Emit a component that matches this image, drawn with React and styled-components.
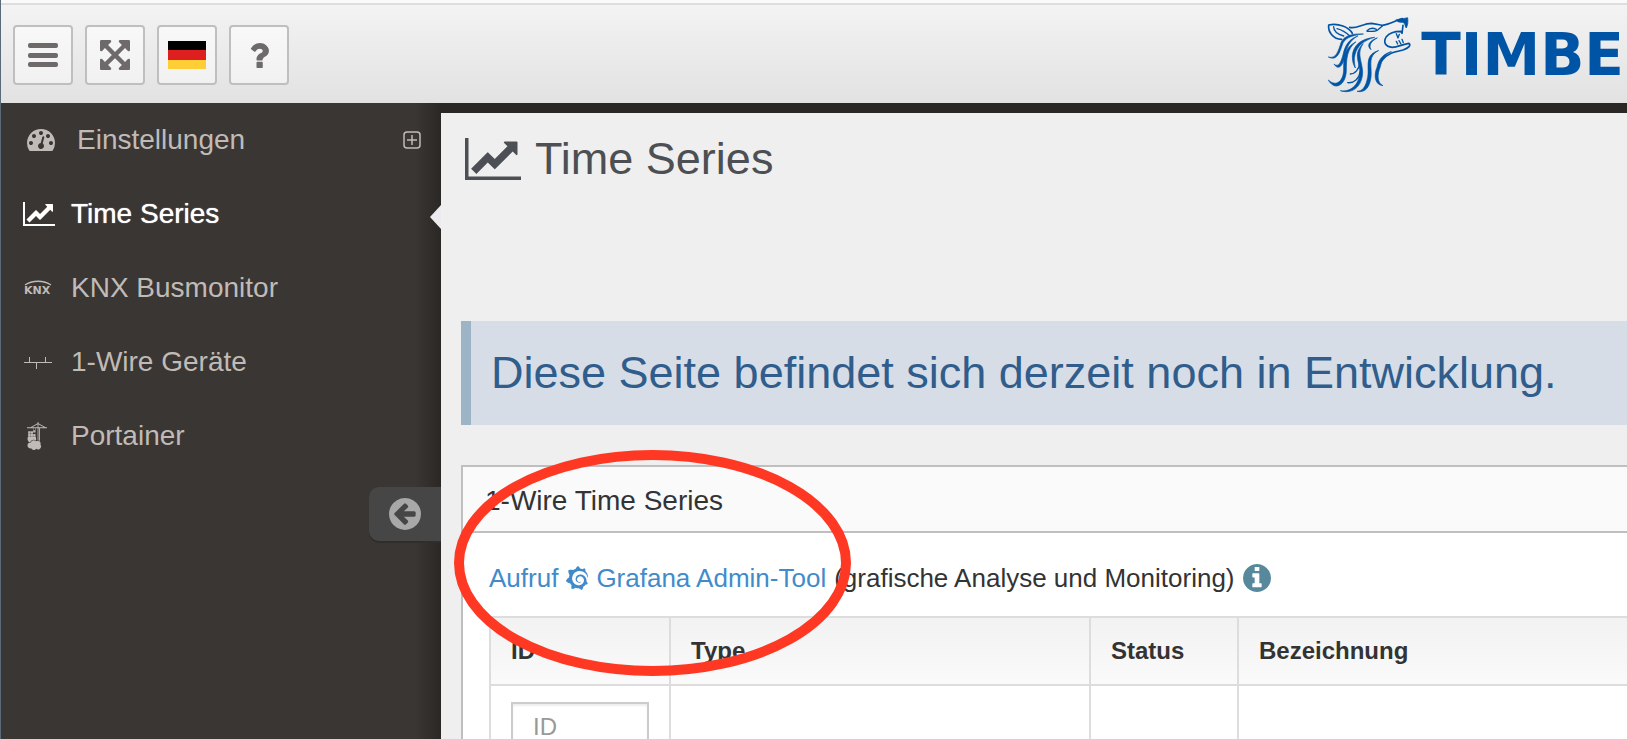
import React from 'react'
import styled, { createGlobalStyle, css } from 'styled-components'
import { SiGrafana, SiPortainer } from 'react-icons/si'

const GlobalStyle = createGlobalStyle`
  * {
    box-sizing: border-box;
  }

  body {
    margin: 0;
    overflow: hidden;
    font-family: "Helvetica Neue", "Liberation Sans", Arial, sans-serif;
    font-size: 26px;
    color: #333;
    background: #efefef;
  }
`;

const Page = styled.div`
  display: flex;
  flex-direction: column;
  height: 100vh;
  overflow: hidden;
  border-left: 1px solid #5a6a78;
`;

const Header = styled.header`
  display: flex;
  flex: none;
  justify-content: space-between;
  align-items: center;
  height: 103px;
  padding-left: 12px;
  padding-top: 4px;
  overflow: hidden;
  border-top: 3px solid #fafafa;
  background: linear-gradient(to bottom, #dedede 2px, #f3f3f3 2px, #e2e2e2 100%);
`;

const Toolbar = styled.div`
  display: flex;
  gap: 12px;
`;

const ToolButton = styled.button`
  display: flex;
  justify-content: center;
  align-items: center;
  width: 60px;
  height: 60px;
  padding: 0;
  border: 2px solid #bfbfbf;
  border-radius: 4px;
  background: linear-gradient(to bottom, #f8f8f8, #f1f1f1);
  color: #6d6a69;
  cursor: pointer;
`;

const Flag = styled.span`
  width: 38px;
  height: 28px;
  background: linear-gradient(to bottom, #000 0 9px, #dd201f 9px 19px, #ffce36 19px);
`;

const Brand = styled.a`
  display: flex;
  align-items: center;
  gap: 10px;
  padding-right: 3px;
  color: #0054a6;
  text-decoration: none;
  font-family: "DejaVu Sans", sans-serif;
  font-size: 58px;
  line-height: 78px;
  font-weight: bold;
`;

const Body = styled.div`
  display: flex;
  flex: 1;
  min-height: 0;
`;

const Sidebar = styled.aside`
  position: relative;
  display: flex;
  flex-direction: column;
  flex: none;
  width: 440px;
  background: linear-gradient(to right, #3a3633 414px, #2a2725 440px);
`;

const MenuLink = styled.a`
  position: relative;
  display: flex;
  align-items: center;
  height: 74px;
  padding: 0 20px 0 22px;
  font-size: 28px;
  color: ${props => props.$active ? '#fff' : '#c0bbb7'};
  text-decoration: none;

  ${props => props.$active && css`
    text-shadow: 0 0 1px #fff;

    &::after {
      content: '';
      position: absolute;
      right: 0;
      top: 28px;
      border: 12px solid transparent;
      border-left-width: 0;
      border-right: 11px solid #ececf0;
    }
  `}
`;

const MenuIcon = styled.span`
  display: flex;
  align-items: center;
  width: ${props => props.$wide ? '54px' : '48px'};
  padding-left: ${props => props.$wide ? '4px' : '0'};
`;

const MenuLabel = styled.span`
  flex: 1;
`;

const CollapseButton = styled.button`
  display: flex;
  justify-content: center;
  align-items: center;
  align-self: flex-end;
  width: 72px;
  height: 54px;
  margin-top: 14px;
  padding: 0;
  border: 0;
  border-radius: 10px 0 0 10px;
  background: #464646;
  box-shadow: 0 2px 0 #302d2b;
  color: #a8a8a8;
  cursor: pointer;
`;

const Main = styled.main`
  flex: 1;
  min-width: 0;
  padding-left: 20px;
  border-top: 10px solid #2a2725;
  background: #efefef;
`;

const Title = styled.h1`
  display: flex;
  align-items: center;
  gap: 14px;
  height: 92px;
  margin: 0 0 116px;
  padding-left: 4px;
  font-size: 45px;
  font-weight: normal;
  color: #4c4f53;
`;

const Alert = styled.div`
  padding-left: 20px;
  border-left: 10px solid #9cb4c5;
  background: #d6dde7;
  color: #305d8c;
  font-size: 45px;
  line-height: 104px;
  white-space: nowrap;
`;

const Panel = styled.section`
  position: relative;
  margin-top: 40px;
  border: 2px solid #bfbfbf;
  border-right: 0;
  background: #fff;
`;

const PanelTitle = styled.h2`
  margin: 0;
  padding-left: 22px;
  border-bottom: 2px solid #bfbfbf;
  background: #fafafa;
  font-size: 28px;
  font-weight: normal;
  line-height: 68px;
  height: 66px;
`;

const PanelBody = styled.div`
  padding: 25px 0 26px 26px;
`;

const Intro = styled.p`
  display: flex;
  align-items: center;
  gap: 8px;
  height: 40px;
  margin: 0 0 18px;
  white-space: nowrap;
`;

const ToolLink = styled.a`
  display: flex;
  align-items: center;
  gap: 7px;
  color: #428bca;
  text-decoration: none;
`;

const InfoBadge = styled.span`
  display: flex;
  color: #57889c;
`;

const Table = styled.table`
  width: 100%;
  table-layout: fixed;
  border-collapse: collapse;
  font-size: 24px;
`;

const HeadCell = styled.th`
  width: ${props => props.$width || 'auto'};
  height: 68px;
  padding: 0 20px;
  border: 2px solid #ddd;
  border-right: 0;
  background: linear-gradient(to bottom, #f2f2f2, #fafafa);
  text-align: left;
`;

const Cell = styled.td`
  padding: 16px 20px;
  border: 2px solid #ddd;
  border-right: 0;
`;

const FilterInput = styled.input`
  display: block;
  width: 100%;
  height: 50px;
  padding: 0 20px;
  border: 2px solid #ccc;
  box-shadow: inset 0 2px 2px #eee;
  font-family: inherit;
  font-size: 24px;

  &::placeholder {
    color: #999;
  }
`;

const Marker = styled.svg`
  position: absolute;
  left: -9px;
  top: -17px;
  pointer-events: none;
`;

const Glyph = ({ d, box = '128 128 1536 1536', width, height }) => (
  <svg width={width} height={height} viewBox={box} fill="currentColor" aria-hidden="true">
    <path d={d} />
  </svg>
)

const ARROWS = 'M1411 541l-355 355 355 355 144-144q29-31 70-14 39 17 39 59v448q0 26-19 45t-45 19h-448q-42 0-59-40-17-39 14-69l144-144-355-355-355 355 144 144q31 30 14 69-17 40-59 40h-448q-26 0-45-19t-19-45v-448q0-42 40-59 39-17 69 14l144 144 355-355-355-355-144 144q-19 19-45 19-12 0-24-5-40-17-40-59v-448q0-26 19-45t45-19h448q42 0 59 40 17 39-14 69l-144 144 355 355 355-355-144-144q-31-30-14-69 17-40 59-40h448q26 0 45 19t19 45v448q0 42-39 59-13 5-25 5-26 0-45-19z'
const QUESTION = 'M1088 1256v240q0 16-12 28t-28 12h-240q-16 0-28-12t-12-28v-240q0-16 12-28t28-12h240q16 0 28 12t12 28zm316-600q0 54-15.5 101t-35 76.5-55 59.5-57.5 43.5-61 35.5q-41 23-68.5 65t-27.5 67q0 17-12 32.5t-28 15.5h-240q-15 0-25.5-18.5t-10.5-37.5v-45q0-83 65-156.5t143-108.5q59-27 84-56t25-76q0-42-46.5-74t-107.5-32q-65 0-108 29-35 25-107 115-13 16-31 16-12 0-25-8l-164-125q-13-10-15.5-25t5.5-28q160-266 464-266 80 0 161 31t146 83 106 127.5 41 158.5z'
const CHART = 'M2048 1536v128h-2048v-1536h128v1408h1920zm-128-1248v435q0 21-19.5 29.5t-35.5-7.5l-121-121-633 633q-10 10-23 10t-23-10l-233-233-416 416-192-192 585-585q10-10 23-10t23 10l233 233 464-464-121-121q-16-16-7.5-35.5t29.5-19.5h435q14 0 23 9t9 23z'
const GAUGE = 'M384 1152q0-53-37.5-90.5t-90.5-37.5-90.5 37.5-37.5 90.5 37.5 90.5 90.5 37.5 90.5-37.5 37.5-90.5zm192-448q0-53-37.5-90.5t-90.5-37.5-90.5 37.5-37.5 90.5 37.5 90.5 90.5 37.5 90.5-37.5 37.5-90.5zm428 481l101-382q6-26-7.5-48.5t-38.5-29.5-48 6.5-30 39.5l-101 382q-60 5-107 43.5t-63 98.5q-20 77 20 146t117 89 146-20 89-117q16-60-6-117t-72-91zm660-33q0-53-37.5-90.5t-90.5-37.5-90.5 37.5-37.5 90.5 37.5 90.5 90.5 37.5 90.5-37.5 37.5-90.5zm-640-640q0-53-37.5-90.5t-90.5-37.5-90.5 37.5-37.5 90.5 37.5 90.5 90.5 37.5 90.5-37.5 37.5-90.5zm448 192q0-53-37.5-90.5t-90.5-37.5-90.5 37.5-37.5 90.5 37.5 90.5 90.5 37.5 90.5-37.5 37.5-90.5zm320 448q0 261-141 483-19 29-54 29h-1402q-35 0-54-29-141-221-141-483 0-182 71-348t191-286 286-191 348-71 348 71 286 191 191 286 71 348z'
const CIRCLE = 'q0 209-103 385.5t-279.5 279.5-385.5 103-385.5-103-279.5-279.5-103-385.5 103-385.5 279.5-279.5 385.5-103 385.5 103 279.5 279.5 103 385.5z'
const ARROW_LEFT = 'M1408 960v-128q0-26-19-45t-45-19h-502l189-189q19-19 19-45t-19-45l-91-91q-18-18-45-18t-45 18l-362 362-91 91q-18 18-18 45t18 45l91 91 362 362q18 18 45 18t45-18l91-91q18-18 18-45t-18-45l-189-189h502q26 0 45-19t19-45zm256-64' + CIRCLE
const INFO = 'M1152 1376v-160q0-14-9-23t-23-9h-96v-512q0-14-9-23t-23-9h-320q-14 0-23 9t-9 23v160q0 14 9 23t23 9h96v320h-96q-14 0-23 9t-9 23v160q0 14 9 23t23 9h448q14 0 23-9t9-23zm-128-896v-160q0-14-9-23t-23-9h-192q-14 0-23 9t-9 23v160q0 14 9 23t23 9h192q14 0 23-9t9-23zm640 416' + CIRCLE

const BarsIcon = () => (
  <svg width="30" height="26" viewBox="0 0 30 26" fill="currentColor" aria-hidden="true">
    <rect y="1" width="30" height="5" rx="2" />
    <rect y="11" width="30" height="5" rx="2" />
    <rect y="20" width="30" height="5" rx="2" />
  </svg>
)

const KnxIcon = () => (
  <svg width="34" height="24" viewBox="0 0 34 24" aria-hidden="true">
    <path d="M2 9C9 4 21 4 28 9" fill="none" stroke="currentColor" strokeWidth="1.3" />
    <text x="1" y="18" fontSize="11" fontWeight="bold" fontFamily="DejaVu Sans" fill="currentColor">KNX</text>
  </svg>
)

const WireIcon = () => (
  <svg width="30" height="14" viewBox="0 0 30 14" fill="none" stroke="currentColor" aria-hidden="true">
    <path d="M1 7.5H29M6.500 2V7M13.500 8V14M22.500 2V7" />
  </svg>
)

const PlusIcon = () => (
  <svg width="18" height="18" viewBox="0 0 18 18" fill="none" stroke="#c0bbb7" strokeWidth="1.500" aria-hidden="true">
    <rect x="1" y="1" width="16" height="16" rx="3" />
    <path d="M9 4V14M4 9H14" />
  </svg>
)

const WolfIcon = () => (
  <svg width="84" height="78" viewBox="14 14 252 234" stroke="currentColor" strokeLinecap="round" strokeLinejoin="round" aria-hidden="true">
    {/* tapered strands of the mane */}
    <g fill="currentColor" strokeWidth="2">
      <path d="M122 68C88 66 64 74 56 94C48 118 42 144 18 137C44 150 52 124 60 100C66 82 84 72 122 68Z" />
      <path d="M106 74C78 84 68 104 62 130C56 154 48 170 35 158C50 182 64 158 68 132C74 106 82 88 106 74Z" />
      <path d="M100 92C64 110 64 144 64 174C64 206 44 230 18 206C38 242 72 220 72 176C72 144 74 112 100 92Z" />
      <path d="M156 78C116 82 92 102 90 134C90 152 94 162 99 170C96 154 94 142 98 130C104 106 122 88 156 78Z" />
      <path d="M164 80C140 88 132 104 146 115C138 100 148 90 164 80Z" />
      <path d="M122 98C94 124 108 146 112 174C116 214 88 244 54 238C96 252 126 216 120 172C116 144 104 122 122 98Z" />
      <path d="M168 118C124 130 142 168 136 198C130 228 120 240 104 240C130 246 142 226 146 198C150 164 134 136 168 118Z" />
      <path d="M206 121C176 130 168 150 164 168C152 196 160 222 182 223C164 214 164 190 174 166C178 150 184 132 206 121Z" />
      <path d="M222 26L256 19C258 32 256 42 252 50C248 48 250 40 244 34C238 32 228 36 222 26Z" />
    </g>
    <g fill="none" strokeWidth="5">
      <path d="M90 66C80 48 48 34 19 41C17 62 32 84 58 84" />
      <path d="M82 48C102 54 122 36 148 36C162 37 172 42 180 42C202 40 222 26 240 22" />
      <path d="M242 42L239 66L235 60C214 60 200 66 192 76C182 92 188 106 210 108C226 108 242 98 260 96C266 102 260 110 242 116C214 122 196 126 178 148" />
    </g>
    <g fill="none" strokeWidth="4">
      <path d="M34 46C34 60 44 68 64 74M44 52C60 56 74 66 82 74" />
      <path d="M222 67L227 80L231 69M222 90L226 98M230 88L236 98M239 84L243 94" />
      <path d="M134 58C142 50 154 50 162 54M134 60C146 60 158 62 166 56L180 44" />
      <path d="M112 156C110 174 98 188 84 188M114 180C110 202 96 216 76 214" />
    </g>
  </svg>
)

const App = () => {
  return (
    <Page>
      <GlobalStyle />
      <Header>
        <Toolbar>
          <ToolButton aria-label="Menü"><BarsIcon /></ToolButton>
          <ToolButton aria-label="Vollbild"><Glyph d={ARROWS} width={30} height={30} /></ToolButton>
          <ToolButton aria-label="Deutsch"><Flag /></ToolButton>
          <ToolButton aria-label="Hilfe"><Glyph d={QUESTION} box="384 256 1024 1280" width={20} height={25} /></ToolButton>
        </Toolbar>
        <Brand href="#">
          <WolfIcon />
          <span>TIMBE</span>
        </Brand>
      </Header>
      <Body>
        <Sidebar>
          <nav>
            <MenuLink href="#">
              <MenuIcon $wide><Glyph d={GAUGE} box="0 256 1792 1408" width={28} height={22} /></MenuIcon>
              <MenuLabel>Einstellungen</MenuLabel>
              <PlusIcon />
            </MenuLink>
            <MenuLink href="#" $active>
              <MenuIcon><Glyph d={CHART} box="0 128 2048 1536" width={32} height={24} /></MenuIcon>
              <MenuLabel>Time Series</MenuLabel>
            </MenuLink>
            <MenuLink href="#">
              <MenuIcon><KnxIcon /></MenuIcon>
              <MenuLabel>KNX Busmonitor</MenuLabel>
            </MenuLink>
            <MenuLink href="#">
              <MenuIcon><WireIcon /></MenuIcon>
              <MenuLabel>1-Wire Geräte</MenuLabel>
            </MenuLink>
            <MenuLink href="#">
              <MenuIcon><SiPortainer size={28} /></MenuIcon>
              <MenuLabel>Portainer</MenuLabel>
            </MenuLink>
          </nav>
          <CollapseButton aria-label="Menü einklappen">
            <Glyph d={ARROW_LEFT} width={32} height={32} />
          </CollapseButton>
        </Sidebar>
        <Main>
          <Title>
            <Glyph d={CHART} box="0 128 2048 1536" width={56} height={42} />
            Time Series
          </Title>
          <Alert>Diese Seite befindet sich derzeit noch in Entwicklung.</Alert>
          <Panel>
            <PanelTitle>1-Wire Time Series</PanelTitle>
            <PanelBody>
              <Intro>
                <ToolLink href="#">
                  Aufruf <SiGrafana size={24} /> Grafana Admin-Tool
                </ToolLink>
                <span>(grafische Analyse und Monitoring)</span>
                <InfoBadge><Glyph d={INFO} width={28} height={28} /></InfoBadge>
              </Intro>
              <Table>
                <thead>
                  <tr>
                    <HeadCell $width="180px">ID</HeadCell>
                    <HeadCell $width="420px">Type</HeadCell>
                    <HeadCell $width="148px">Status</HeadCell>
                    <HeadCell>Bezeichnung</HeadCell>
                  </tr>
                </thead>
                <tbody>
                  <tr>
                    <Cell><FilterInput type="text" placeholder="ID" aria-label="ID" /></Cell>
                    <Cell />
                    <Cell />
                    <Cell />
                  </tr>
                </tbody>
              </Table>
            </PanelBody>
            <Marker width="397" height="226" viewBox="0 0 397 226" fill="none" stroke="#ff3824" strokeWidth="10" aria-hidden="true">
              <ellipse cx="198.500" cy="113" rx="193.500" ry="108" />
            </Marker>
          </Panel>
        </Main>
      </Body>
    </Page>
  )
}

export default App
